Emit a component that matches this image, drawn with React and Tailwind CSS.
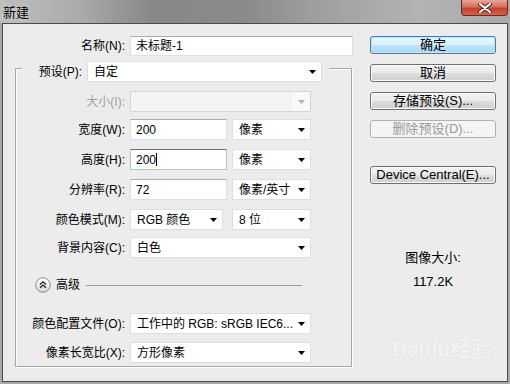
import React from 'react';

const Arrow = ({ disabled }) => (
  <svg width="7" height="4" viewBox="0 0 7 4" className="shrink-0">
    <polygon points="0,0 7,0 3.5,4" fill={disabled ? '#b0b0b0' : '#000'} />
  </svg>
);

const Select = ({ w, text, disabled }) => (
  <div
    className={`${w} h-[21px] flex items-center justify-between pl-[6px] pr-[5px] border ${
      disabled ? 'bg-[#f4f4f4] border-[#d5d5d5]' : 'bg-white border-[#dedede]'
    }`}
  >
    <span className="whitespace-nowrap">{text}</span>
    <Arrow disabled={disabled} />
  </div>
);

const Input = ({ w, text, focused }) => (
  <div
    className={`${w} h-[21px] flex items-center pl-[5px] bg-white border ${
      focused
        ? 'border-[#a6c8e0] border-t-[#3d7bad]'
        : 'border-[#dbdfe6] border-t-[#abadb3]'
    }`}
  >
    <span>{text}</span>
    {focused && <span className="w-px h-[13px] bg-black" />}
  </div>
);

const Row = ({ label, disabled, children, mt }) => (
  <div className={`flex items-center h-[21px] gap-[5px] ${mt}`}>
    <span
      className={`w-[109px] text-right whitespace-nowrap ${
        disabled ? 'text-[#a0a0a0]' : 'text-black'
      }`}
    >
      {label}
    </span>
    <div className="flex items-center">{children}</div>
  </div>
);

const Button = ({ children, variant, mt }) => {
  const styles = {
    primary:
      'border-[#3c7fb1] bg-[linear-gradient(#eaf6fd_0%,#d9f0fc_50%,#bee6fd_50%,#a7d9f5_100%)] shadow-[inset_0_0_0_1px_#c5e6f8]',
    normal:
      'border-[#707070] bg-[linear-gradient(#f2f2f2_0%,#ebebeb_50%,#dddddd_50%,#cfcfcf_100%)] shadow-[inset_0_0_0_1px_#fcfcfc]',
    disabled: 'border-[#adb2b5] bg-[#f4f4f4] text-[#9a9a9a]',
  };
  return (
    <div
      className={`${mt} h-[18px] w-[126px] flex items-center justify-center rounded-[3px] border text-[13px] ${styles[variant]}`}
    >
      {children}
    </div>
  );
};

const App = () => {
  return (
    <div className="w-[510px] h-[384px] relative overflow-hidden flex flex-col bg-[#a9a9a9] text-[12px] text-black [font-family:'Liberation_Sans','Noto_Sans_CJK_SC',sans-serif]">
      {/* title bar */}
      <div className="h-[23px] shrink-0 flex items-start bg-[linear-gradient(to_right,#bdbdbd_0%,#acacac_15%,#878787_30%,#8a8a8a_48%,#9f9f9f_62%,#b3b3b3_82%,#a9a9a9_100%)]">
        <span className="pl-[3px] pt-[3px] text-[13px] [text-shadow:0_0_4px_#e6e6e6]">新建</span>
        <div className="ml-auto mr-[2px] w-[47px] h-[16px] flex items-center justify-center rounded-b-[4px] border border-t-0 border-[#6b2a1e] bg-[linear-gradient(#e9a595_0%,#d5705a_45%,#c2412b_55%,#d0644a_100%)]">
          <svg width="14" height="10" viewBox="0 0 14 10">
            <path d="M2 1 L12 9 M12 1 L2 9" stroke="#4a2a24" strokeWidth="4" strokeLinecap="round" />
            <path d="M2 1 L12 9 M12 1 L2 9" stroke="#fff" strokeWidth="2.2" strokeLinecap="round" />
          </svg>
        </div>
      </div>

      {/* dialog body */}
      <div className="mx-[2px] h-[359px] shrink-0 flex border border-[#4b4b4b] bg-[#ececec]">
        {/* left column */}
        <div className="w-[352px] shrink-0 pt-[12px] flex flex-col">
          <div className="flex items-center h-[20px] gap-[5px]">
            <span className="w-[122px] text-right whitespace-nowrap">名称(N):</span>
            <div className="w-[223px] h-[20px] flex items-center pl-[5px] bg-white border border-[#dbdfe6] border-t-[#abadb3]">
              未标题-1
            </div>
          </div>

          <div className="mt-[12px] ml-[12px] w-[337px] h-[299px] flex flex-col border border-[#a8a8a8] shadow-[inset_1px_1px_0_#fff,1px_1px_0_#fff]">
            <div className="mt-[-8px] ml-[6px] self-start flex items-center gap-[5px] bg-[#ececec] pl-[6px] pr-[7px]">
              <span className="w-[54px] text-right whitespace-nowrap">预设(P):</span>
              <Select w="w-[235px]" text="自定" />
            </div>

            <Row label="大小(I):" disabled mt="mt-[9px]">
              <div className="w-[181px] h-[21px] flex items-center justify-end bg-[#f4f4f4] border border-[#d5d5d5]">
                <div className="w-[18px] h-full flex items-center justify-center bg-[#f9f9f9]">
                  <Arrow disabled />
                </div>
              </div>
            </Row>
            <Row label="宽度(W):" mt="mt-[7px]">
              <div className="flex gap-[5px]">
                <Input w="w-[97px]" text="200" />
                <Select w="w-[79px]" text="像素" />
              </div>
            </Row>
            <Row label="高度(H):" mt="mt-[9px]">
              <div className="flex gap-[5px]">
                <Input w="w-[97px]" text="200" focused />
                <Select w="w-[79px]" text="像素" />
              </div>
            </Row>
            <Row label="分辨率(R):" mt="mt-[9px]">
              <div className="flex gap-[5px]">
                <Input w="w-[97px]" text="72" />
                <Select w="w-[79px]" text="像素/英寸" />
              </div>
            </Row>
            <Row label="颜色模式(M):" mt="mt-[9px]">
              <div className="flex gap-[9px]">
                <Select w="w-[93px]" text="RGB 颜色" />
                <Select w="w-[79px]" text="8 位" />
              </div>
            </Row>
            <Row label="背景内容(C):" mt="mt-[7px]">
              <Select w="w-[181px]" text="白色" />
            </Row>

            {/* advanced */}
            <div className="mt-[19px] h-[16px] flex items-center">
              <svg width="16" height="16" viewBox="0 0 16 16" className="ml-[19px] shrink-0">
                <defs>
                  <linearGradient id="adv" x1="0" y1="0" x2="0" y2="1">
                    <stop offset="0" stopColor="#ffffff" />
                    <stop offset="1" stopColor="#d6d6d6" />
                  </linearGradient>
                </defs>
                <circle cx="8" cy="8" r="7.3" fill="url(#adv)" stroke="#8d8d8d" />
                <path d="M5 7.5 L8 4.8 L11 7.5 M5 10.8 L8 8.1 L11 10.8" fill="none" stroke="#222" strokeWidth="1.3" />
              </svg>
              <span className="ml-[5px] w-[24px] whitespace-nowrap">高级</span>
              <div className="ml-[6px] w-[216px] h-px bg-[#9a9a9a]" />
            </div>

            <Row label="颜色配置文件(O):" mt="mt-[20px]">
              <Select w="w-[181px]" text="工作中的 RGB: sRGB IEC6..." />
            </Row>
            <Row label="像素长宽比(X):" mt="mt-[8px]">
              <Select w="w-[181px]" text="方形像素" />
            </Row>
          </div>
        </div>

        {/* right column */}
        <div className="ml-[15px] w-[126px] pt-[12px] flex flex-col">
          <Button variant="primary" mt="mt-0">确定</Button>
          <Button variant="normal" mt="mt-[10px]">取消</Button>
          <Button variant="normal" mt="mt-[10px]">存储预设(S)...</Button>
          <Button variant="disabled" mt="mt-[10px]">删除预设(D)...</Button>
          <Button variant="normal" mt="mt-[28px]">Device Central(E)...</Button>
          <div className="mt-[66px] text-center leading-[16px] text-[13px]">图像大小:</div>
          <div className="mt-[8px] text-center leading-[16px] text-[13px]">117.2K</div>
        </div>
      </div>

      {/* watermark */}
      <div className="absolute left-[392px] top-[337px] flex flex-col items-center text-[#f3f3f3] [text-shadow:0_0_1px_#d2d2d2]">
        <span className="text-[21px] font-bold leading-[24px]">Baidu经验</span>
        <span className="text-[11px] leading-[12px]">jingyan.baidu.com</span>
      </div>
    </div>
  );
};

export default App;
